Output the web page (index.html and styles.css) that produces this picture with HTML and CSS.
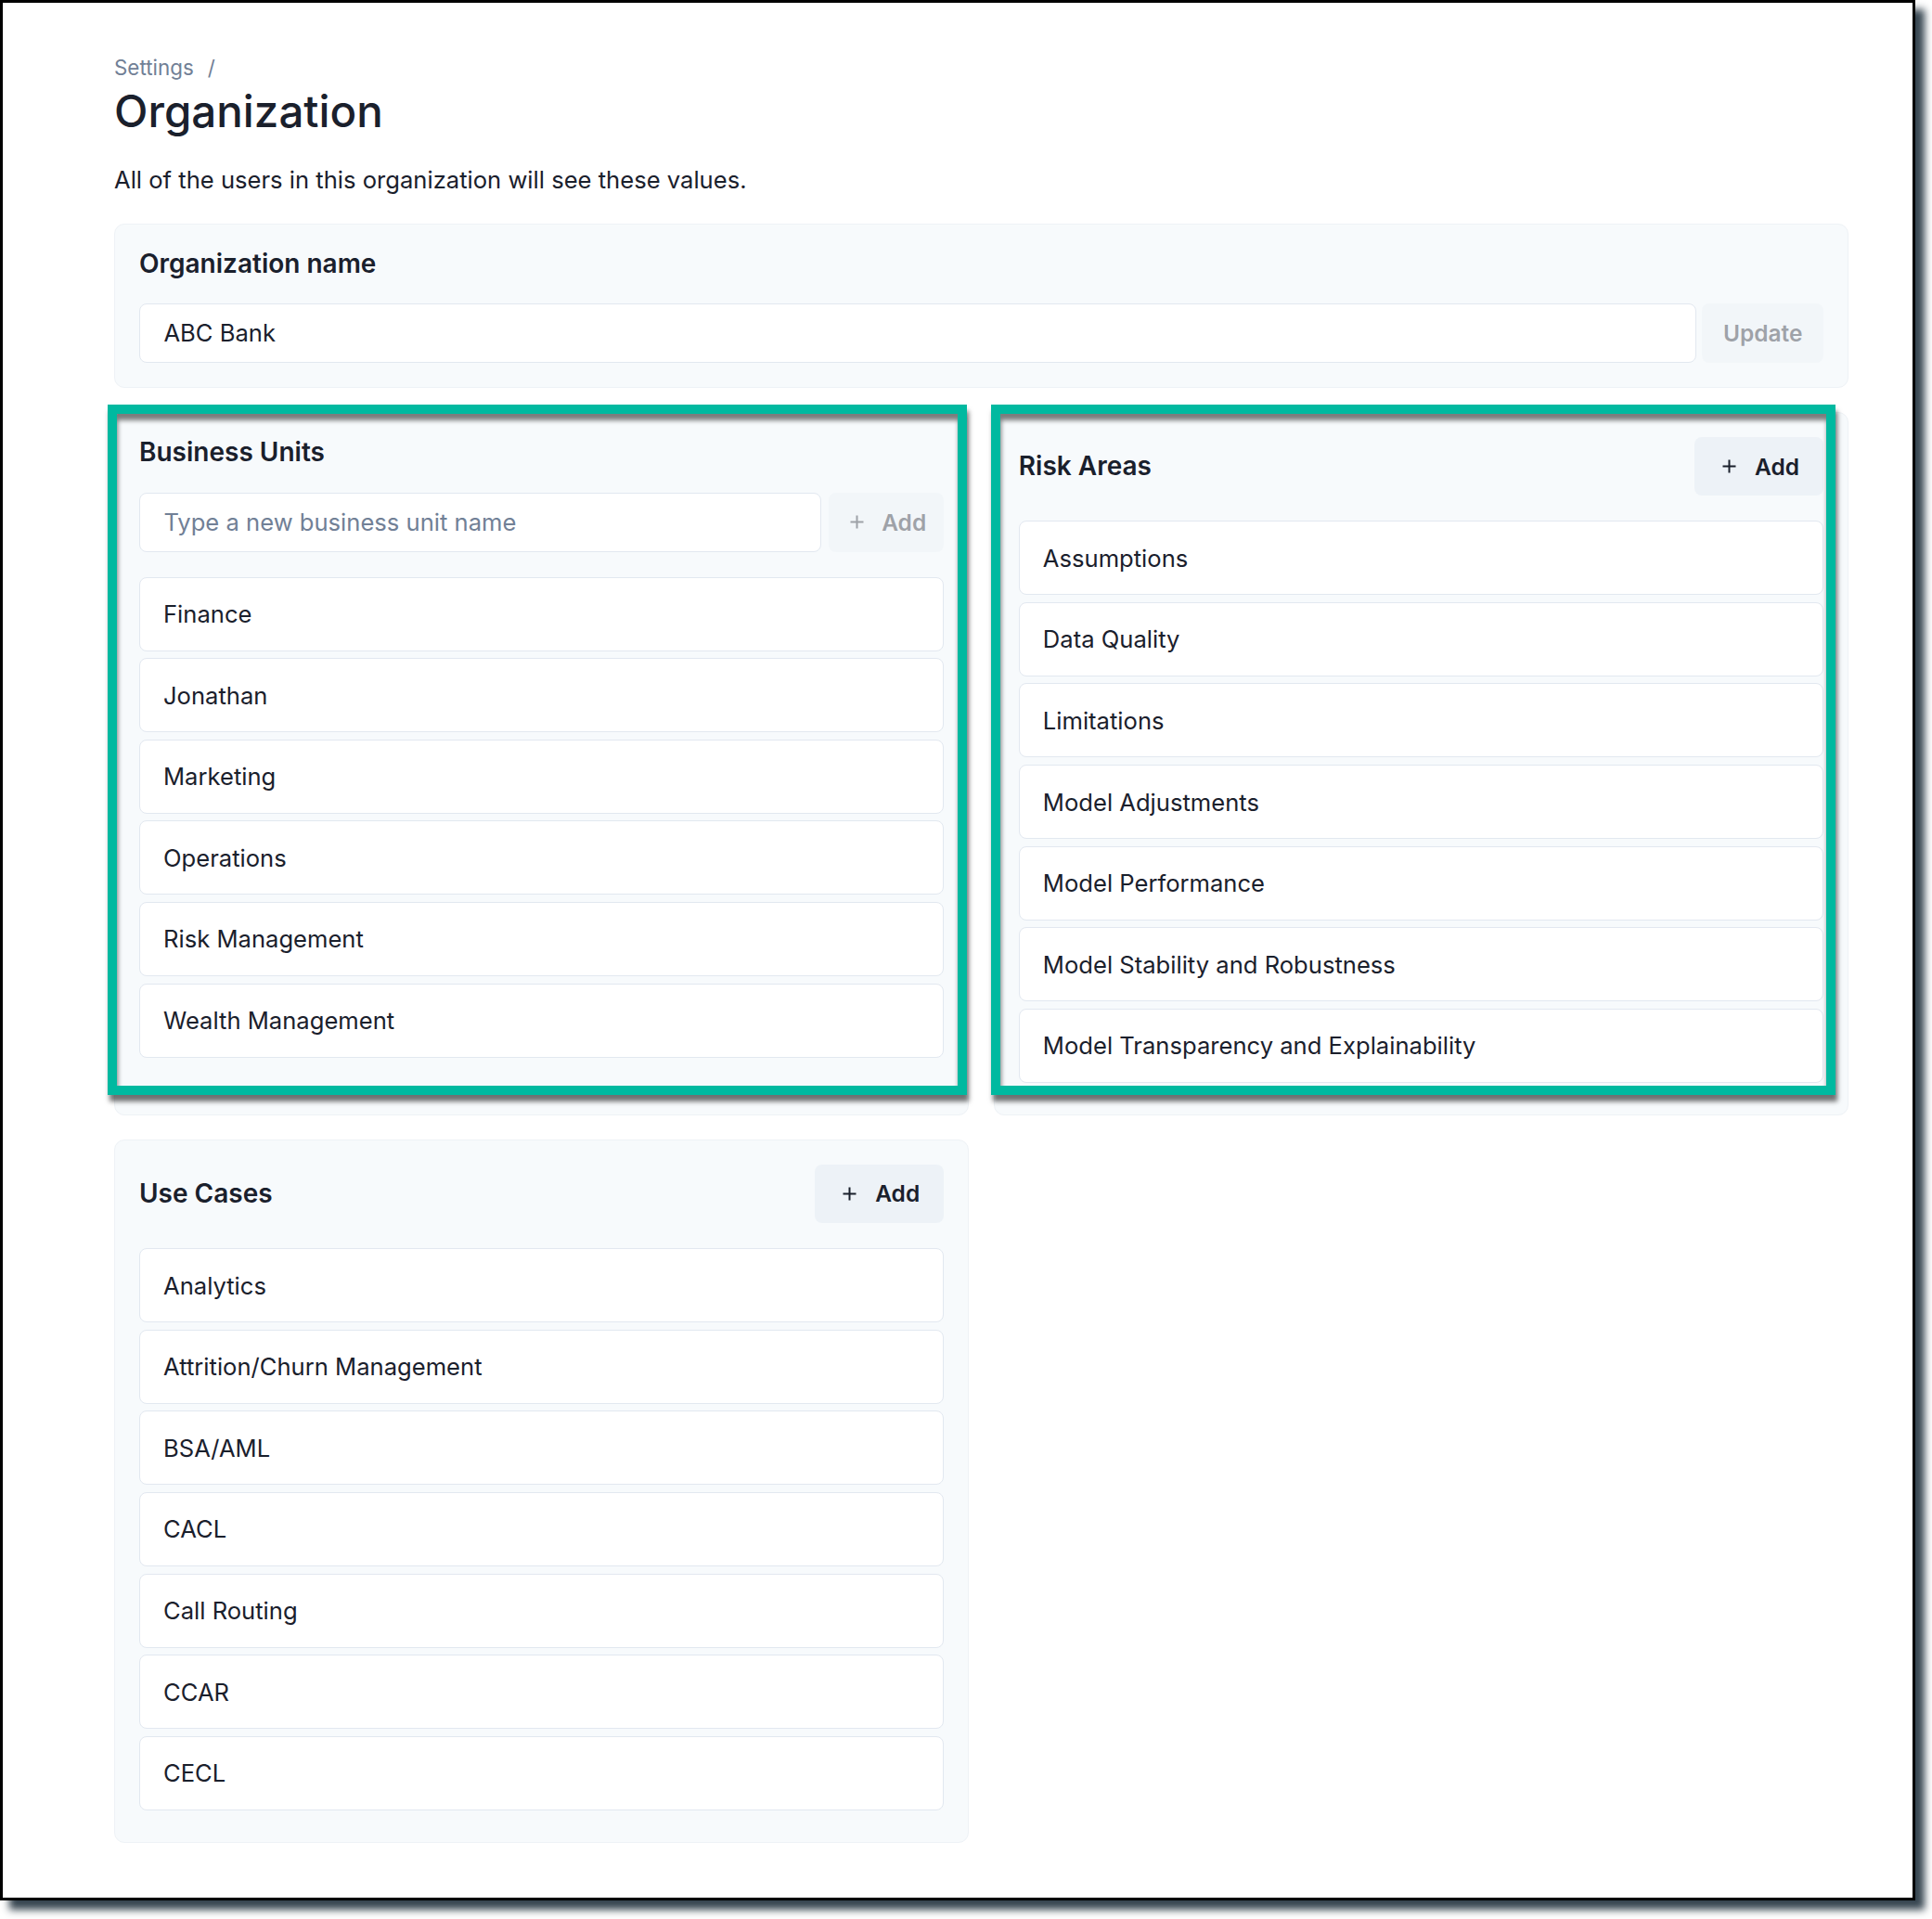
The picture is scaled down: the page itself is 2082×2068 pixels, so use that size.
FILE: index.html
```html
<!DOCTYPE html>
<html lang="en">
<head>
<meta charset="utf-8">
<title>Organization</title>
<link rel="stylesheet" href="styles.css">
</head>
<body>
<div class="frame">
  <div class="page">
    <nav class="crumbs"><span>Settings</span><span class="sep">/</span></nav>
    <h1 class="title">Organization</h1>
    <p class="lead">All of the users in this organization will see these values.</p>

    <section class="card org">
      <h2 class="card-title">Organization name</h2>
      <div class="row row-org">
        <div class="input">ABC Bank</div>
        <button class="btn btn-update disabled">Update</button>
      </div>
    </section>

    <div class="grid">
      <section class="card">
        <h2 class="card-title">Business Units</h2>
        <div class="row row-bu">
          <div class="input placeholder">Type a new business unit name</div>
          <button class="btn btn-add-sm disabled"><svg class="plus" viewBox="0 0 15 15"><path d="M7.5 0.5V14.5M0.5 7.5H14.5"/></svg><span>Add</span></button>
        </div>
        <ul class="list">
          <li>Finance</li>
          <li>Jonathan</li>
          <li>Marketing</li>
          <li>Operations</li>
          <li>Risk Management</li>
          <li>Wealth Management</li>
        </ul>
      </section>

      <section class="card">
        <div class="head">
          <h2 class="card-title">Risk Areas</h2>
          <button class="btn btn-add"><svg class="plus" viewBox="0 0 15 15"><path d="M7.5 0.5V14.5M0.5 7.5H14.5"/></svg><span>Add</span></button>
        </div>
        <ul class="list">
          <li>Assumptions</li>
          <li>Data Quality</li>
          <li>Limitations</li>
          <li>Model Adjustments</li>
          <li>Model Performance</li>
          <li>Model Stability and Robustness</li>
          <li>Model Transparency and Explainability</li>
        </ul>
      </section>

      <section class="card">
        <div class="head">
          <h2 class="card-title">Use Cases</h2>
          <button class="btn btn-add"><svg class="plus" viewBox="0 0 15 15"><path d="M7.5 0.5V14.5M0.5 7.5H14.5"/></svg><span>Add</span></button>
        </div>
        <ul class="list">
          <li>Analytics</li>
          <li>Attrition/Churn Management</li>
          <li>BSA/AML</li>
          <li>CACL</li>
          <li>Call Routing</li>
          <li>CCAR</li>
          <li>CECL</li>
        </ul>
      </section>
    </div>
  </div>

  <div class="hl hl-left"></div>
  <div class="hl hl-right"></div>
</div>
</body>
</html>
```

FILE: styles.css
```css
* { box-sizing: border-box; }

html, body {
  margin: 0;
  padding: 0;
  background: #ffffff;
}

body {
  font-family: Inter, "Noto Sans", "Liberation Sans", sans-serif;
  color: #1a202c;
  width: 2082px;
  height: 2068px;
  overflow: hidden;
}

.frame {
  position: relative;
  width: 2064px;
  height: 2048px;
  border: 3px solid #000000;
  background: #ffffff;
  box-shadow: 10px 10px 8px rgba(38, 54, 66, 0.92);
}

.page {
  width: 1869px;
  margin-left: 120px;
  padding-top: 53.8px;
}

.crumbs {
  display: flex;
  font-size: 22.4px;
  line-height: 32px;
  color: #718096;
}

.crumbs .sep {
  margin-left: 15px;
}

.title {
  margin: 7px 0 0;
  font-size: 47.5px;
  line-height: 48px;
  font-weight: 500;
  color: #1a202c;
}

.lead {
  margin: 32.2px 0 0;
  font-size: 25.6px;
  line-height: 36px;
  color: #1a202c;
}

.card {
  background: #f7fafc;
  border: 1px solid #eef2f6;
  border-radius: 11px;
  padding: 26px 26px 26px;
}

.org {
  margin-top: 28.7px;
}

.card-title {
  margin: 0;
  font-size: 28px;
  line-height: 33.33px;
  font-weight: 600;
  color: #1a202c;
}

.row {
  display: flex;
  margin-top: 26.3px;
}

.row-org { gap: 6.7px; }
.row-bu { gap: 8.3px; margin-top: 27px; }

.input {
  flex: 1;
  height: 63.33px;
  background: #ffffff;
  border: 1px solid #e2e8f0;
  border-radius: 8px;
  padding-left: 25.4px;
  display: flex;
  align-items: center;
  font-size: 25.6px;
  color: #1a202c;
}

.input.placeholder { color: #718096; }

.btn {
  flex: none;
  height: 63.33px;
  border: none;
  border-radius: 8px;
  background: #edf2f7;
  font-family: inherit;
  font-size: 24.5px;
  font-weight: 600;
  color: #1a202c;
  display: inline-flex;
  align-items: center;
  padding: 0;
}

.btn.disabled { opacity: 0.4; }

.btn-update { padding: 0 22.5px; }

.btn-add-sm { padding: 0 19px 0 22.4px; gap: 19.3px; }

.btn-add { padding: 0 26px 0 30px; gap: 20px; }

.plus {
  width: 15px;
  height: 15px;
  fill: none;
  stroke: currentColor;
  stroke-width: 2;
}

.grid {
  display: grid;
  grid-template-columns: 1fr 1fr;
  column-gap: 26.67px;
  row-gap: 26px;
  margin-top: 26.3px;
  align-items: stretch;
}

.head {
  display: flex;
  justify-content: space-between;
  align-items: center;
}

.list {
  list-style: none;
  margin: 27px 0 8px;
  padding: 0;
  display: flex;
  flex-direction: column;
  gap: 7.6px;
}

.list li {
  height: 80px;
  background: #ffffff;
  border: 1px solid #e2e8f0;
  border-radius: 8px;
  padding-left: 25px;
  display: flex;
  align-items: center;
  font-size: 25.6px;
  color: #1a202c;
}

.hl {
  position: absolute;
  border: 10px solid #00b9a0;
  height: 744px;
  top: 433px;
  box-shadow: 2px 7px 5px rgba(0, 0, 0, 0.55), inset 1px 7px 5px rgba(0, 0, 0, 0.5);
  pointer-events: none;
}

.hl-left { left: 113px; width: 926px; }
.hl-right { left: 1065px; width: 910px; }
```
